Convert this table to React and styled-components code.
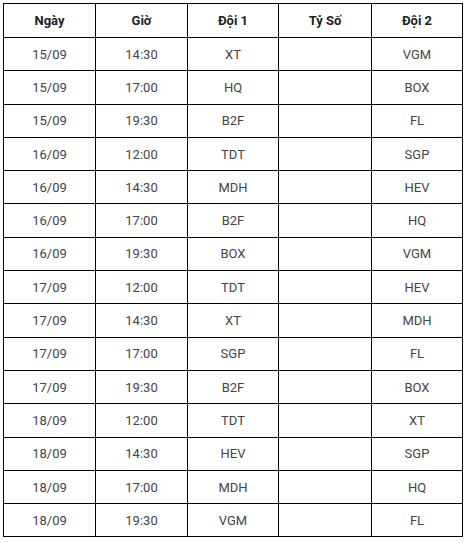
import React from "react";
import styled, { createGlobalStyle } from "styled-components";

const GlobalStyle = createGlobalStyle`
  body {
    margin: 3px;
    background: #fff;
    font-family: Roboto, "Liberation Sans", Arial, sans-serif;
  }
`;

const Table = styled.table`
  border-collapse: collapse;
  width: 459px;
  table-layout: fixed;
`;

const HeadCell = styled.th`
  border: 1px solid #000;
  height: 33px;
  padding: 0;
  font-size: 13px;
  font-weight: 700;
  color: #222;
  text-align: center;
  vertical-align: middle;
`;

const Cell = styled.td`
  border: 1px solid #000;
  height: 32.3px;
  padding: 0;
  font-size: 13px;
  font-weight: 400;
  color: #444;
  text-align: center;
  vertical-align: middle;
`;

const matches = [
  ["15/09", "14:30", "XT", "VGM"],
  ["15/09", "17:00", "HQ", "BOX"],
  ["15/09", "19:30", "B2F", "FL"],
  ["16/09", "12:00", "TDT", "SGP"],
  ["16/09", "14:30", "MDH", "HEV"],
  ["16/09", "17:00", "B2F", "HQ"],
  ["16/09", "19:30", "BOX", "VGM"],
  ["17/09", "12:00", "TDT", "HEV"],
  ["17/09", "14:30", "XT", "MDH"],
  ["17/09", "17:00", "SGP", "FL"],
  ["17/09", "19:30", "B2F", "BOX"],
  ["18/09", "12:00", "TDT", "XT"],
  ["18/09", "14:30", "HEV", "SGP"],
  ["18/09", "17:00", "MDH", "HQ"],
  ["18/09", "19:30", "VGM", "FL"],
];

export default function App() {
  return (
    <>
      <GlobalStyle />
      <Table>
        <colgroup>
          <col style={{ width: 92 }} />
          <col style={{ width: 92 }} />
          <col style={{ width: 91 }} />
          <col style={{ width: 93 }} />
          <col style={{ width: 91 }} />
        </colgroup>
        <thead>
          <tr>
            <HeadCell>Ngày</HeadCell>
            <HeadCell>Giờ</HeadCell>
            <HeadCell>Đội 1</HeadCell>
            <HeadCell>Tỷ Số</HeadCell>
            <HeadCell>Đội 2</HeadCell>
          </tr>
        </thead>
        <tbody>
          {matches.map(([day, time, home, away], i) => (
            <tr key={i}>
              <Cell>{day}</Cell>
              <Cell>{time}</Cell>
              <Cell>{home}</Cell>
              <Cell></Cell>
              <Cell>{away}</Cell>
            </tr>
          ))}
        </tbody>
      </Table>
    </>
  );
}
